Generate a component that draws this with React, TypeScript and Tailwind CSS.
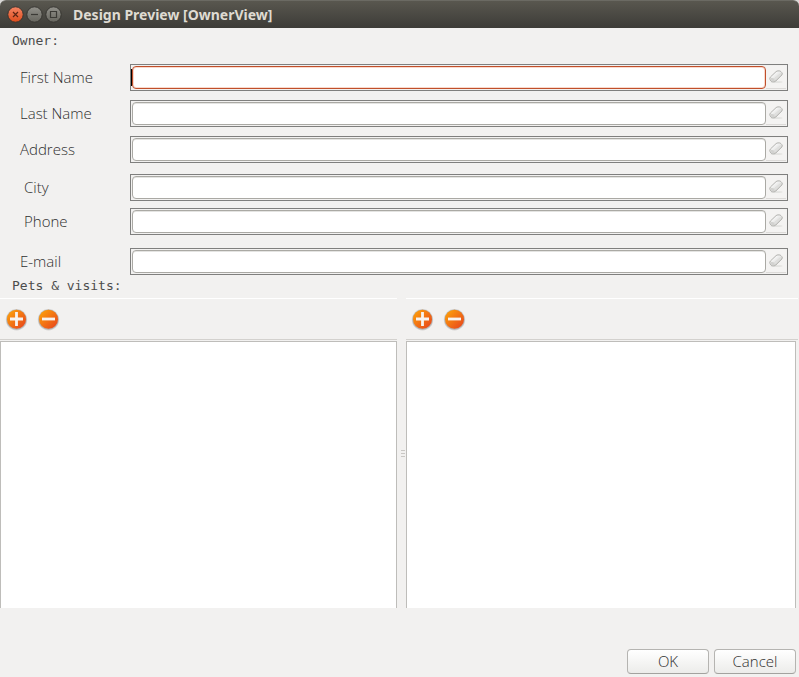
import React, { useId, useState } from "react";

const FIELDS = [
  { label: "First Name", name: "firstName", row: "pl-5", gap: "mb-[9px]" },
  { label: "Last Name", name: "lastName", row: "pl-5", gap: "mb-[9px]" },
  { label: "Address", name: "address", row: "pl-5", gap: "mb-[11px]" },
  { label: "City", name: "city", row: "pl-6", gap: "mb-[7px]" },
  { label: "Phone", name: "phone", row: "pl-6", gap: "mb-[13px]" },
  { label: "E-mail", name: "email", row: "pl-5", gap: "" },
];

function EraserIcon() {
  const id = useId();
  return (
    <svg width="16" height="16" viewBox="0 0 16 16" aria-hidden="true">
      <defs>
        <linearGradient id={id} x1="0" y1="0" x2="1" y2="1">
          <stop offset="0.2" stopColor="#ffffff" />
          <stop offset="0.9" stopColor="#c9c9c7" />
        </linearGradient>
      </defs>
      <ellipse cx="8.5" cy="13" rx="6" ry="1" fill="#e3e3e1" />
      <path
        d="M2.4 8 8 2.7Q8.9 1.9 10 1.9H11.2Q12.2 1.9 12.9 2.6L13.8 3.6Q14.8 4.8 13.8 6L7.8 12Q7 12.8 5.8 12.8H4.6Q3.7 12.8 3 12L2.2 10.9Q1.2 9.4 2.4 8Z"
        fill={`url(#${id})`}
        stroke="#a9a9a6"
        strokeWidth="0.9"
      />
      <path d="M2.6 8.8 5.3 9.2Q6.6 9.6 6.8 11.9L5.8 12.3H4.5Q3 12 2.2 10Z" fill="#d2d2d0" />
      <path d="M6.3 9.7 13.4 3.9" fill="none" stroke="#dadad8" strokeWidth="0.8" />
    </svg>
  );
}

function RoundIcon({ plus }: { plus?: boolean }) {
  const id = useId();
  return (
    <svg width="24" height="24" viewBox="0 0 24 24" aria-hidden="true">
      <defs>
        <linearGradient id={id} x1="0" y1="0" x2="1" y2="1">
          <stop offset="0.1" stopColor="#fc9d0b" />
          <stop offset="0.85" stopColor="#ea4f1b" />
        </linearGradient>
      </defs>
      <circle cx="12.5" cy="12.8" r="10.7" fill="#000" fillOpacity="0.12" />
      <circle cx="12.5" cy="12.7" r="10.1" fill="#000" fillOpacity="0.15" />
      <circle cx="12.5" cy="12.3" r="9.5" fill={`url(#${id})`} />
      <path
        d={plus ? "M6 12H19M12.5 5V19" : "M6 12H19"}
        stroke="#f7f3f0"
        strokeWidth="2.8"
      />
    </svg>
  );
}

function WindowButton({ kind, label }: { kind: "close" | "min" | "max"; label: string }) {
  const id = useId();
  const close = kind === "close";
  return (
    <button type="button" aria-label={label} className="size-[17px]">
      <svg width="17" height="17" viewBox="0 0 17 17" aria-hidden="true">
        <defs>
          <linearGradient id={id} x1="0" y1="0" x2="0" y2="1">
            <stop offset="0" stopColor={close ? "#f58564" : "#92918b"} />
            <stop offset="1" stopColor={close ? "#de4c1c" : "#66655e"} />
          </linearGradient>
        </defs>
        <circle cx="8.5" cy="8.5" r="7.7" fill={`url(#${id})`} stroke="#33322e" strokeWidth="0.9" />
        <path
          d={
            close
              ? "M6 6 11 11M11 6 6 11"
              : kind === "min"
                ? "M5 8.5H12"
                : "M5.5 5.5H11.5V11.5H5.5Z"
          }
          fill="none"
          stroke={close ? "#5c2413" : "#3b3a36"}
          strokeWidth="1.2"
        />
      </svg>
    </button>
  );
}

function ListPane({ title, toolbar, list }: { title: string; toolbar: string; list: string }) {
  return (
    <section aria-label={title} className="flex min-w-0 flex-col">
      <div
        className={`flex h-[42px] items-center gap-2 border-t border-b border-t-white border-b-[#d3d1ce] pl-1 ${toolbar}`}
      >
        <button type="button" aria-label="Add" className="size-6">
          <RoundIcon plus />
        </button>
        <button type="button" aria-label="Remove" className="size-6">
          <RoundIcon />
        </button>
      </div>
      <div className={`mt-px flex-1 border border-b-0 border-[#bebdba] bg-white ${list}`} />
    </section>
  );
}

export default function App() {
  const [values, setValues] = useState<Record<string, string>>({});
  const set = (name: string, value: string) => setValues((v) => ({ ...v, [name]: value }));

  return (
    <div className="bg-[#d9d8d6]">
      <div className="flex min-h-screen flex-col rounded-t-md bg-[#f2f1f0] font-['Open_Sans','Noto_Sans',sans-serif] text-[#2f2f2f]">
        <header className="flex h-7 items-center rounded-t-md border-t border-[#6b6a63] bg-linear-to-b from-[#59574f] to-[#3d3c38] pl-[7px]">
          <div className="flex gap-[2px]">
            <WindowButton kind="close" label="Close" />
            <WindowButton kind="min" label="Minimize" />
            <WindowButton kind="max" label="Maximize" />
          </div>
          <h1 className="pl-[11px] font-['Noto_Sans',sans-serif] text-[14px] leading-5 font-bold text-[#dfdbd2]">
            Design Preview [OwnerView]
          </h1>
        </header>

        <form className="flex flex-1 flex-col" onSubmit={(e) => e.preventDefault()}>
          <h2 className="mt-[3px] mb-[13px] pl-3 font-['DejaVu_Sans_Mono',monospace] text-[13px] leading-5 text-[#4c4c4c]">
            Owner:
          </h2>

          {FIELDS.map((f, i) => (
            <div key={f.name} className={`flex h-[27px] items-center pr-[11px] ${f.gap}`}>
              <label htmlFor={f.name} className={`w-[130px] shrink-0 pb-[2px] text-[15px] leading-5 font-light ${f.row}`}>
                {f.label}
              </label>
              <div className="flex h-full min-w-0 flex-1 border border-[#7f7f7e] p-px">
                {i === 0 && <span className="my-[3px] -ml-px w-px bg-black" />}
                <input
                  id={f.name}
                  value={values[f.name] ?? ""}
                  onChange={(e) => set(f.name, e.target.value)}
                  className={`h-[23px] min-w-0 flex-1 rounded border bg-white px-1 text-[15px] outline-none ${
                    i === 0
                      ? "border-[#c04f2b] shadow-[inset_0_0_0_1px_#f9d9cd]"
                      : "border-[#aaa9a4] shadow-[inset_0_1px_0_#e4e4e2]"
                  }`}
                />
                <button
                  type="button"
                  aria-label={`Clear ${f.label}`}
                  onClick={() => set(f.name, "")}
                  className="flex w-5 items-center justify-center border-b border-[#dcdad8] bg-[#f4f3f2]"
                >
                  <EraserIcon />
                </button>
              </div>
            </div>
          ))}

          <h2 className="mt-px mb-[2px] pl-3 font-['DejaVu_Sans_Mono',monospace] text-[13px] leading-5 text-[#4c4c4c]">
            Pets &amp; visits:
          </h2>

          <div className="grid flex-1 grid-cols-[397fr_9px_393fr]">
            <ListPane title="Pets" toolbar="" list="" />
            <div className="flex flex-col items-end justify-center gap-[2px] pr-px">
              <span className="h-px w-1 bg-[#c9c7c4]" />
              <span className="h-px w-1 bg-[#c9c7c4]" />
              <span className="h-px w-1 bg-[#c9c7c4]" />
            </div>
            <ListPane title="Visits" toolbar="mr-px" list="mr-[3px]" />
          </div>

          <footer className="flex justify-end gap-[5px] pt-[41px] pr-[3px] pb-[3px] text-[15px] leading-5 font-light">
            <button
              type="submit"
              className="h-[25px] w-[82px] rounded border border-[#b5b4b1] border-b-[#a3a29f] bg-linear-to-b from-white to-[#ececea] pb-[2px]"
            >
              OK
            </button>
            <button
              type="button"
              className="h-[25px] w-[82px] rounded border border-[#b5b4b1] border-b-[#a3a29f] bg-linear-to-b from-white to-[#ececea] pb-[2px]"
            >
              Cancel
            </button>
          </footer>
        </form>
      </div>
    </div>
  );
}
